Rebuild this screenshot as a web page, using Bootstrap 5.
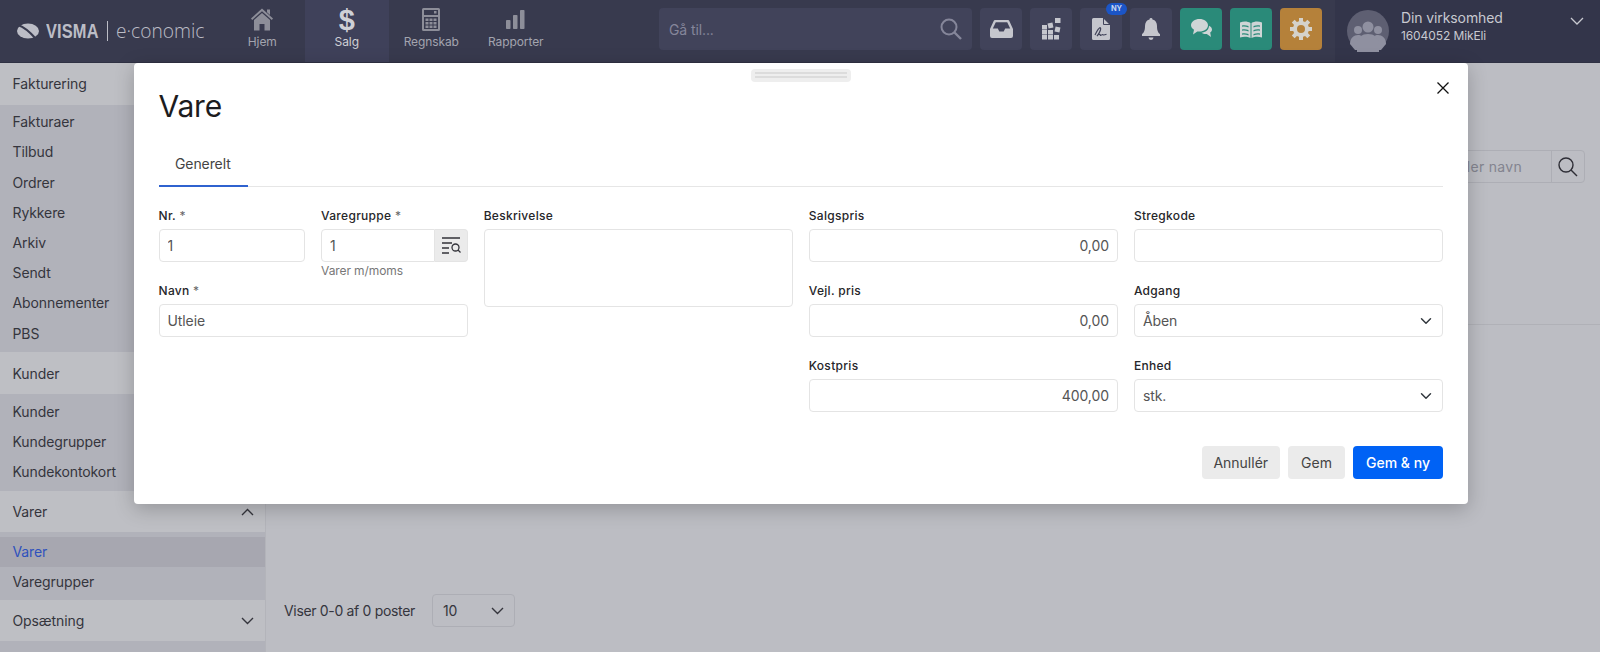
<!DOCTYPE html>
<html lang="da">
<head>
    <meta charset="UTF-8">
    <title>Vare</title>
    <link href="https://cdn.jsdelivr.net/npm/bootstrap@5.3.0/dist/css/bootstrap.min.css" rel="stylesheet">
    <style>
        html, body {
            height: 652px;
            overflow: hidden;
        }

        body {
            background: #bcbdc3;
            font-family: Inter, "Liberation Sans", sans-serif;
            font-size: 14px;
            letter-spacing: -.1px;
            color: #35353d;
        }

        /* top bar */
        .topbar {
            height: 63px;
            background: #383a4e;
            border-bottom: 1px solid #2f3143;
        }

        .brand {
            width: 220px;
            height: 62px;
            padding-left: 17px;
            color: #bcbdc6;
        }

        .brand-visma {
            font-family: "Liberation Sans", sans-serif;
            font-weight: 700;
            font-size: 21px;
            letter-spacing: .2px;
            width: 53px;
            margin-left: 7px;
            display: inline-block;
            transform: scaleX(.78);
            transform-origin: left center;
        }

        .brand-bar {
            width: 1px;
            height: 20px;
            background: #bcbdc6;
            margin: 0 8px 0 8px;
        }

        .brand-eco {
            font-family: "Open Sans", sans-serif;
            font-weight: 300;
            font-size: 19.2px;
            letter-spacing: 0;
        }

        .main-tab {
            width: 84.5px;
            height: 62px;
            color: #a3a4ae;
            font-size: 12px;
            text-decoration: none;
            padding-top: 8px;
        }

        .main-tab.is-on {
            background: #3f415a;
            color: #cfd0d6;
        }

        .tab-icon {
            height: 24px;
            margin-bottom: 1px;
        }

        .dollar-glyph {
            font-family: "Liberation Sans", sans-serif;
            font-weight: 700;
            font-size: 29px;
            line-height: 24px;
        }

        .goto-box {
            width: 313px;
            height: 42px;
            margin-left: 101px;
            margin-right: 8px;
            background: #41435a;
            border-radius: 4px;
            padding: 0 10px;
            color: #85869a;
        }

        .tool-btn {
            width: 42px;
            height: 42px;
            background: #41435a;
            border-radius: 4px;
            position: relative;
        }

        .tool-teal {
            background: #2a8a79;
        }

        .tool-orange {
            background: #b5813a;
        }

        .ny-flag {
            position: absolute;
            top: -5px;
            left: 26px;
            width: 21px;
            height: 12px;
            border-radius: 6px;
            background: #1b55c6;
            color: #c6d4ef;
            font-size: 7.5px;
            font-weight: 700;
            line-height: 12px;
            text-align: center;
        }

        .user-box {
            height: 62px;
            margin-left: 13px;
            background: #33354a;
            padding: 0 16px 0 12px;
            color: #c8c9d0;
        }

        .user-text {
            padding-top: 9px;
        }

        .user-name {
            font-size: 14px;
            line-height: 18px;
        }

        .user-sub {
            font-size: 12px;
            line-height: 18px;
        }

        .user-chevron {
            margin-top: 17px;
        }

        /* sidebar */
        .side-menu {
            width: 266px;
            height: 589px;
            background: #b1b2ba;
            border-right: 1px solid #b3b4ba;
            overflow: hidden;
        }

        .side-head {
            height: 41.5px;
            background: #bebfc4;
            padding: 0 11px 0 12.5px;
        }

        .side-sub {
            background: #b1b2ba;
            padding: 2.700px 0 3.700px;
        }

        .side-sub.is-open {
            padding: 4.500px 0 2.700px;
        }

        .side-link {
            display: block;
            height: 30.2px;
            line-height: 30px;
            padding-left: 12.5px;
            color: #35353d;
            text-decoration: none;
        }

        .side-link.is-on {
            background: #a7a7b0;
            color: #2f52bd;
        }

        /* content behind the dialog */
        .list-pane {
            padding: 87px 15px 0 18px;
        }

        .find-box {
            width: 280px;
            height: 33px;
            border: 1px solid #adaeb5;
            border-radius: 4px;
        }

        .find-text {
            color: #83848f;
            line-height: 31px;
            padding-right: 29px;
            letter-spacing: .3px;
        }

        .find-btn {
            width: 33px;
            border-left: 1px solid #adaeb5;
        }

        .pane-line {
            height: 1px;
            background: #b0b1b7;
            margin: 141px -15px 269px 0;
        }

        .pager-text {
            letter-spacing: -.33px;
        }

        .page-size {
            width: 83px;
            height: 33px;
            border: 1px solid #adaeb5;
            border-radius: 4px;
            margin-left: 17px;
            padding: 0 10px;
        }

        /* dialog */
        .vare-dialog {
            position: absolute;
            left: 133.5px;
            top: 63px;
            width: 1334.5px;
            height: 441px;
            background: #fff;
            border: 0;
            border-radius: 4px;
            padding: 0 25px;
            box-shadow: 0 5px 20px rgba(0, 0, 0, .22);
        }

        .drag-grip {
            position: absolute;
            left: 617.5px;
            top: 6px;
            width: 100px;
            height: 13px;
            background: #eee;
            border-radius: 4px;
            padding: 3px 4px;
        }

        .drag-grip i {
            display: block;
            height: 2px;
            background: #dcdcdc;
            margin-bottom: 2px;
        }

        .dialog-x {
            position: absolute;
            right: 19px;
            top: 19px;
            line-height: 0;
        }

        .dialog-title {
            font-size: 30px;
            font-weight: 400;
            line-height: 40px;
            margin: 23px 0 0;
            letter-spacing: -.2px;
            color: #1c1c1e;
        }

        .tab-strip {
            height: 61px;
            border-bottom: 1px solid #e6e6e6;
            margin-bottom: 21px;
            align-items: flex-end;
        }

        .tab-strip span {
            width: 89px;
            height: 44px;
            padding-left: 16.5px;
            line-height: 42px;
            color: #444;
            border-bottom: 2px solid #2f62cf;
            margin-bottom: -1px;
        }

        .fld-label {
            display: block;
            font-size: 12px;
            font-weight: 500;
            line-height: 16px;
            margin-bottom: 5px;
            letter-spacing: .3px;
            color: #26262a;
        }

        .fld-label em {
            font-style: normal;
            font-weight: 400;
            color: #666;
        }

        .fld-input.form-control, .fld-input.form-select {
            height: 33px;
            padding: 0 8px;
            font-size: 14px;
            letter-spacing: -.1px;
            color: #555;
            border: 1px solid #e4e4e4;
            border-radius: 4px;
        }

        .fld-input.form-select {
            background-position: right 8px center;
        }

        .fld-area.form-control {
            height: 78px;
            border: 1px solid #e4e4e4;
            border-radius: 4px;
            resize: none;
        }

        .fld-group {
            margin-bottom: 21px;
        }

        .fld-addon {
            width: 33px;
            background: #ebebeb;
            border: 1px solid #e4e4e4;
            border-left: 0;
            border-radius: 0 4px 4px 0;
        }

        .fld-help {
            height: 21px;
            font-size: 12px;
            line-height: 18px;
            color: #777;
        }

        .act-btn {
            height: 33px;
            padding: 0;
            font-size: 14px;
            font-weight: 400;
            line-height: 33px;
            border: 0;
            border-radius: 4px;
            background: #ebebeb;
            color: #444;
        }

        .act-cancel {
            width: 78.5px;
        }

        .act-save {
            width: 57px;
        }

        .act-btn.is-main {
            width: 90px;
            background: #0062f5;
            color: #fff;
            font-weight: 500;
        }

        .act-row {
            margin-top: 34px;
        }
    </style>
</head>
<body>

<nav class="topbar d-flex align-items-start">
    <a class="brand d-flex align-items-center text-decoration-none" href="#">
        <svg width="22" height="16" viewBox="0 0 22 16"><ellipse cx="11" cy="8" rx="11" ry="7.6" fill="#bcbdc6"/><path d="M1 2 C7 4 13 9 19 16" stroke="#383a4e" stroke-width="2.2" fill="none"/></svg>
        <span class="brand-visma">VISMA</span>
        <span class="brand-bar"></span>
        <span class="brand-eco">e·conomic</span>
    </a>

    <a class="main-tab d-flex flex-column align-items-center" href="#">
        <span class="tab-icon"><svg width="22" height="23" viewBox="0 0 22 23" fill="#8d8e99"><path d="M11 .5 22 10.5l-1.2 1.4L11 3.2 1.2 11.9 0 10.5z"/><path d="M16 1.500h3v5.500l-3-2.700z"/><path d="M11 5 19 12v10.500h-5.500V16h-5v6.500H3V12z"/></svg></span>
        Hjem
    </a>
    <a class="main-tab is-on d-flex flex-column align-items-center" href="#">
        <span class="tab-icon dollar-glyph">$</span>
        Salg
    </a>
    <a class="main-tab d-flex flex-column align-items-center" href="#">
        <span class="tab-icon"><svg width="18" height="23" viewBox="0 0 18 23" fill="#8d8e99"><path fill-rule="evenodd" d="M1.500 0h15A1.500 1.500 0 0 1 18 1.500v20a1.500 1.500 0 0 1-1.500 1.500h-15A1.500 1.500 0 0 1 0 21.500v-20A1.500 1.500 0 0 1 1.500 0zM2 2v5h14V2zM2 9v12h14V9z"/><rect x="12" y="3" width="2.500" height="2.500"/><rect x="3.500" y="10.500" width="3" height="2.500"/><rect x="7.500" y="10.500" width="3" height="2.500"/><rect x="11.500" y="10.500" width="3" height="2.500"/><rect x="3.500" y="14" width="3" height="2.500"/><rect x="7.500" y="14" width="3" height="2.500"/><rect x="11.500" y="14" width="3" height="2.500"/><rect x="3.500" y="17.500" width="3" height="2.500"/><rect x="7.500" y="17.500" width="3" height="2.500"/><rect x="11.500" y="17.500" width="3" height="2.500"/></svg></span>
        Regnskab
    </a>
    <a class="main-tab d-flex flex-column align-items-center" href="#">
        <span class="tab-icon"><svg width="19" height="23" viewBox="0 0 19 23" fill="#8d8e99"><rect x="0" y="12" width="4.500" height="9" rx=".8"/><rect x="7" y="7" width="4.500" height="14" rx=".8"/><rect x="14" y="2" width="4.500" height="19" rx=".8"/></svg></span>
        Rapporter
    </a>

    <div class="goto-box d-flex align-items-center justify-content-between mt-2">
        <span>Gå til...</span>
        <svg width="22" height="22" viewBox="0 0 22 22" fill="none" stroke="#85869a" stroke-width="2"><circle cx="9" cy="9" r="7.500"/><path d="M14.500 14.500 21 21" stroke-width="2.400"/></svg>
    </div>

    <div class="d-flex gap-2 mt-2">
        <div class="tool-btn d-flex align-items-center justify-content-center">
            <svg width="23" height="18" viewBox="0 0 23 18" fill="#c5c6cd"><path fill-rule="evenodd" d="M5 0h13c.6 0 1 .3 1.200.8L23 9v7a2 2 0 0 1-2 2H2a2 2 0 0 1-2-2V9L3.800.8C4 .3 4.400 0 5 0zm.800 2.200L2.800 8.500h5l1.500 3h4.400l1.500-3h5l-3-6.300z"/></svg>
        </div>
        <div class="tool-btn d-flex align-items-center justify-content-center">
            <svg width="19" height="22" viewBox="0 0 19 22" fill="#c5c6cd"><rect x="0" y="7" width="5" height="4.500"/><rect x="0" y="12" width="5" height="4.500"/><rect x="0" y="17" width="5" height="4.500"/><rect x="6" y="12" width="5" height="4.500"/><rect x="6" y="17" width="5" height="4.500"/><rect x="12" y="17" width="5" height="4.500"/><rect x="6" y="5" width="5" height="5" transform="rotate(-12 8.500 7.500)"/><rect x="13" y="0" width="5.500" height="5"/><rect x="13" y="9" width="5" height="5" transform="rotate(12 15.500 11.500)"/></svg>
        </div>
        <div class="tool-btn d-flex align-items-center justify-content-center">
            <svg width="18" height="22" viewBox="0 0 18 22"><path d="M1.500 0H11l7 7v13.500a1.500 1.500 0 0 1-1.500 1.500h-15A1.500 1.500 0 0 1 0 20.500v-19A1.500 1.500 0 0 1 1.500 0z" fill="#c5c6cd"/><path d="M11.500 0v6.500H18" fill="none" stroke="#41435a" stroke-width="1"/><path d="M3 17C5 13 7.500 8.500 8.500 10S6 17 5 18c1-1.500 2.500-2 3-1.500s0 1.200 1 .8 1-1 2-.5 1.500.2 3.500-.5" fill="none" stroke="#41435a" stroke-width="1.200"/></svg>
            <span class="ny-flag">NY</span>
        </div>
        <div class="tool-btn d-flex align-items-center justify-content-center">
            <svg width="18" height="22" viewBox="0 0 18 22" fill="#c5c6cd"><path d="M9 0a1.500 1.500 0 0 1 1.500 1.600C13.500 2.300 15 4.800 15 8c0 5 1.200 6.500 3 8.200V18H0v-1.800C1.800 14.500 3 13 3 8c0-3.200 1.500-5.700 4.500-6.400A1.500 1.500 0 0 1 9 0z"/><path d="M6.500 19.500h5a2.500 2.500 0 0 1-5 0z"/></svg>
        </div>
        <div class="tool-btn tool-teal d-flex align-items-center justify-content-center">
            <svg width="21" height="20" viewBox="0 0 21 20" fill="#cfd5d6"><path d="M8.500 0C13 0 17 2.500 17 6.300s-4 6.300-8.500 6.300c-.8 0-1.500 0-2.200-.2L2 15.500l1-4.700C1.200 9.700 0 8.100 0 6.300 0 2.500 4 0 8.500 0z"/><path d="M18 6.800c1.800.8 3 2.200 3 3.800 0 1.200-.7 2.300-1.800 3l.8 4.400-4.200-3c-2 .2-4-.3-5.300-1.300 3.900-.2 7.500-2.900 7.500-6.900z"/></svg>
        </div>
        <div class="tool-btn tool-teal d-flex align-items-center justify-content-center">
            <svg width="22" height="17" viewBox="0 0 22 17" fill="#cfd5d6"><path fill-rule="evenodd" d="M0 1.500C3.500 0 7.500 0 10.500 2v15C7.500 15.500 3.500 15.500 0 16.500zM2 4.500v1.300c2.200-.4 4.300-.2 6.500.6V5c-2.200-.7-4.300-.9-6.500-.5zm0 4v1.300c2.200-.4 4.300-.2 6.500.6V9c-2.200-.7-4.300-.9-6.500-.5zm0 4v1.300c2.200-.4 4.300-.2 6.500.6V13c-2.200-.7-4.300-.9-6.500-.5z"/><path fill-rule="evenodd" d="M22 1.500C18.500 0 14.500 0 11.500 2v15c3-1.500 7-1.500 10.500-.5zM20 4.500v1.300c-2.200-.4-4.300-.2-6.500.6V5c2.200-.7 4.300-.9 6.500-.5zm0 4v1.300c-2.200-.4-4.300-.2-6.500.6V9c2.200-.7 4.300-.9 6.500-.5zm0 4v1.300c-2.200-.4-4.300-.2-6.500.6V13c2.200-.7 4.300-.9 6.500-.5z"/></svg>
        </div>
        <div class="tool-btn tool-orange d-flex align-items-center justify-content-center">
            <svg width="22" height="22" viewBox="0 0 22 22"><circle cx="11" cy="11" r="6" fill="none" stroke="#d5d2cb" stroke-width="4"/><g stroke="#d5d2cb" stroke-width="4"><path d="M11 0v4M11 18v4M0 11h4M18 11h4M3.200 3.200 6 6M16 16l2.800 2.800M3.200 18.800 6 16M16 6l2.800-2.800"/></g></svg>
        </div>
    </div>

    <div class="user-box flex-grow-1 d-flex align-items-center">
        <svg width="42" height="42" viewBox="0 0 42 42"><circle cx="21" cy="21" r="21" fill="#5e5f72"/><g fill="#8f90a0"><circle cx="11" cy="20" r="4"/><circle cx="31" cy="20" r="4"/><path d="M3 34c0-6 4-9 8-9s6 2 6 9v6H8z"/><path d="M39 34c0-6-4-9-8-9s-6 2-6 9v6h9z"/><circle cx="21" cy="17" r="5.500"/><path d="M10 36c0-9 5-12 11-12s11 3 11 12v6H10z"/></g></svg>
        <div class="user-text ms-2 ps-1 flex-grow-1 align-self-start">
            <div class="user-name">Din virksomhed</div>
            <div class="user-sub">1604052 MikEli</div>
        </div>
        <svg class="user-chevron align-self-start" width="14" height="8" viewBox="0 0 14 8" fill="none" stroke="#c8c9d0" stroke-width="1.300"><path d="M1 1l6 6 6-6"/></svg>
    </div>
</nav>

<div class="d-flex">
    <aside class="side-menu flex-shrink-0">
        <div class="side-head d-flex align-items-center">Fakturering</div>
        <div class="side-sub">
            <a class="side-link" href="#">Fakturaer</a>
            <a class="side-link" href="#">Tilbud</a>
            <a class="side-link" href="#">Ordrer</a>
            <a class="side-link" href="#">Rykkere</a>
            <a class="side-link" href="#">Arkiv</a>
            <a class="side-link" href="#">Sendt</a>
            <a class="side-link" href="#">Abonnementer</a>
            <a class="side-link" href="#">PBS</a>
        </div>
        <div class="side-head d-flex align-items-center">Kunder</div>
        <div class="side-sub">
            <a class="side-link" href="#">Kunder</a>
            <a class="side-link" href="#">Kundegrupper</a>
            <a class="side-link" href="#">Kundekontokort</a>
        </div>
        <div class="side-head d-flex align-items-center justify-content-between">
            Varer
            <svg width="13" height="8" viewBox="0 0 13 8" fill="none" stroke="#35353d" stroke-width="1.400"><path d="M1 7l5.500-5.500L12 7"/></svg>
        </div>
        <div class="side-sub is-open">
            <a class="side-link is-on" href="#">Varer</a>
            <a class="side-link" href="#">Varegrupper</a>
        </div>
        <div class="side-head d-flex align-items-center justify-content-between">
            Opsætning
            <svg width="13" height="8" viewBox="0 0 13 8" fill="none" stroke="#35353d" stroke-width="1.400"><path d="M1 1l5.500 5.500L12 1"/></svg>
        </div>
    </aside>

    <main class="list-pane flex-grow-1">
        <div class="d-flex justify-content-end">
            <div class="find-box d-flex">
                <div class="find-text flex-grow-1 text-end">Søg på nummer eller navn</div>
                <div class="find-btn d-flex align-items-center justify-content-center">
                    <svg width="20" height="20" viewBox="0 0 20 20" fill="none" stroke="#2e2e36" stroke-width="1.400"><circle cx="8" cy="8" r="7"/><path d="M13 13l6 6"/></svg>
                </div>
            </div>
        </div>
        <div class="pane-line"></div>
        <div class="d-flex align-items-center">
            <span class="pager-text">Viser 0-0 af 0 poster</span>
            <div class="page-size d-flex align-items-center justify-content-between">
                <span>10</span>
                <svg width="13" height="8" viewBox="0 0 13 8" fill="none" stroke="#35353d" stroke-width="1.400"><path d="M1 1l5.500 5.500L12 1"/></svg>
            </div>
        </div>
    </main>
</div>

<div class="vare-dialog">
    <div class="drag-grip"><i></i><i></i></div>
    <div class="dialog-x">
        <svg width="12" height="12" viewBox="0 0 12 12" fill="none" stroke="#111" stroke-width="1.300"><path d="M.5.5l11 11M11.500.5l-11 11"/></svg>
    </div>
    <h1 class="dialog-title">Vare</h1>
    <div class="tab-strip d-flex"><span>Generelt</span></div>

    <form class="row gx-3">
        <div class="col-3">
            <div class="row gx-3 align-items-start">
                <div class="col-6">
                    <label class="fld-label">Nr. <em>*</em></label>
                    <input class="form-control fld-input" type="text" value="1">
                </div>
                <div class="col-6">
                    <label class="fld-label">Varegruppe <em>*</em></label>
                    <div class="d-flex">
                        <input class="form-control fld-input rounded-end-0" type="text" value="1">
                        <div class="fld-addon d-flex align-items-center justify-content-center flex-shrink-0">
                            <svg width="20" height="17" viewBox="0 0 20 17" fill="none" stroke="#33333a" stroke-width="1.300"><path d="M1 1h18M1 6h10M1 11h7M1 16h7"/><circle cx="14.500" cy="10.500" r="3.500"/><path d="M17 13l2.500 2.500"/></svg>
                        </div>
                    </div>
                    <div class="fld-help">Varer m/moms</div>
                </div>
            </div>
            <div class="fld-group">
                <label class="fld-label">Navn <em>*</em></label>
                <input class="form-control fld-input" type="text" value="Utleie">
            </div>
        </div>
        <div class="col-3">
            <label class="fld-label">Beskrivelse</label>
            <textarea class="form-control fld-area"></textarea>
        </div>
        <div class="col-3">
            <div class="fld-group">
                <label class="fld-label">Salgspris</label>
                <input class="form-control fld-input text-end" type="text" value="0,00">
            </div>
            <div class="fld-group">
                <label class="fld-label">Vejl. pris</label>
                <input class="form-control fld-input text-end" type="text" value="0,00">
            </div>
            <div>
                <label class="fld-label">Kostpris</label>
                <input class="form-control fld-input text-end" type="text" value="400,00">
            </div>
        </div>
        <div class="col-3">
            <div class="fld-group">
                <label class="fld-label">Stregkode</label>
                <input class="form-control fld-input" type="text">
            </div>
            <div class="fld-group">
                <label class="fld-label">Adgang</label>
                <select class="form-select fld-input"><option>Åben</option></select>
            </div>
            <div>
                <label class="fld-label">Enhed</label>
                <select class="form-select fld-input"><option>stk.</option></select>
            </div>
        </div>
    </form>

    <div class="act-row d-flex justify-content-end gap-2">
        <button class="act-btn act-cancel" type="button">Annullér</button>
        <button class="act-btn act-save" type="button">Gem</button>
        <button class="act-btn is-main" type="button">Gem &amp; ny</button>
    </div>
</div>

<script src="https://cdn.jsdelivr.net/npm/bootstrap@5.3.0/dist/js/bootstrap.bundle.min.js"></script>
</body>
</html>
